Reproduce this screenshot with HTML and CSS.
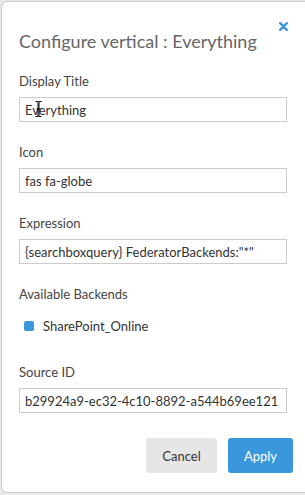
FILE: index.html
```html
<!DOCTYPE html>
<html lang="en">
<head>
  <meta charset="UTF-8">
  <meta name="viewport" content="width=device-width, initial-scale=1.0">
  <title>Configure vertical</title>
  <link rel="stylesheet" href="styles.css">
</head>
<body>
  <div class="modal">
    <div class="modal-header">
      <button class="close-button" aria-label="Close">
        <svg width="9" height="9" viewBox="0 0 9 9"><path d="M1.2 1.2 L7.8 7.8 M7.8 1.2 L1.2 7.8" stroke="#3b97dd" stroke-width="2.4" stroke-linecap="round"/></svg>
      </button>
      <h2 class="modal-title">Configure vertical : Everything</h2>
    </div>

    <div class="modal-body">
      <div class="field">
        <label class="field-label">Display Title</label>
        <div class="input-wrap">
          <input class="field-input" type="text" value="Everything">
          <!-- mouse cursor over the input -->
          <svg class="text-cursor" width="7" height="16" viewBox="0 0 7 16"><path d="M0.5 0.5h2.5v15h-2.5 M6.5 0.5h-2.5v15h2.5 M1.5 8h4" fill="none" stroke="#000" stroke-width="1"/></svg>
        </div>
      </div>

      <div class="field">
        <label class="field-label">Icon</label>
        <input class="field-input" type="text" value="fas fa-globe">
      </div>

      <div class="field">
        <label class="field-label">Expression</label>
        <input class="field-input" type="text" value='{searchboxquery} FederatorBackends:"*"'>
      </div>

      <div class="field">
        <label class="field-label">Available Backends</label>
        <div class="backend-list">
          <label class="backend"><span class="checkbox"></span>SharePoint_Online</label>
        </div>
      </div>

      <div class="field">
        <label class="field-label">Source ID</label>
        <input class="field-input" type="text" value="b29924a9-ec32-4c10-8892-a544b69ee121">
      </div>
    </div>

    <div class="modal-footer">
      <button class="btn btn-default">Cancel</button>
      <button class="btn btn-primary">Apply</button>
    </div>
  </div>
</body>
</html>
```

FILE: styles.css
```css
* {
  margin: 0;
  padding: 0;
  box-sizing: border-box;
}

body {
  font-family: Lato, "Open Sans", sans-serif;
  background: #e9e9e9;
  overflow: hidden;
  color: #333;
}

.modal {
  margin: 1px 0 0 1px;
  width: 304px;
  height: 492px;
  background: #fff;
  border: 1px solid #cacaca;
  border-right: none;
  border-radius: 6px 0 0 6px;
  padding: 0 0 0 17px;
}

.modal-header {
  position: relative;
  padding-top: 28px;
}

.modal-title {
  font-size: 18px;
  font-weight: 400;
  line-height: 23px;
  color: #666;
}

.close-button {
  position: absolute;
  top: 20px;
  left: 260px;
  border: none;
  background: none;
  width: 9px;
  height: 9px;
  display: flex;
  cursor: pointer;
}

.modal-body {
  padding-top: 20px;
  width: 268px;
  display: flex;
  flex-direction: column;
  gap: 22px;
}

.field-label {
  display: block;
  font-size: 13px;
  line-height: 16px;
  color: #444;
  margin-bottom: 8px;
}

.input-wrap {
  position: relative;
}

.field-input {
  display: block;
  width: 268px;
  height: 25px;
  border: 1px solid #cccccc;
  padding: 0 5px;
  font-family: Lato, "Open Sans", sans-serif;
  font-size: 13px;
  color: #333;
  background: #fff;
  outline: none;
}

.text-cursor {
  position: absolute;
  left: 16px;
  top: 4px;
}

.backend-list {
  padding: 8px 0 8px 5px;
}

.backend {
  display: flex;
  align-items: center;
  gap: 9px;
  height: 16px;
  font-size: 13px;
  color: #333;
}

.checkbox {
  width: 10px;
  height: 10px;
  border-radius: 2px;
  background: #3b97dd;
}

.modal-footer {
  display: flex;
  justify-content: flex-end;
  gap: 11px;
  width: 274px;
  padding-top: 25px;
}

.btn {
  height: 35px;
  border: none;
  border-radius: 3px;
  font-family: Lato, "Open Sans", sans-serif;
  font-size: 13px;
  cursor: pointer;
}

.btn-default {
  width: 71px;
  background: #e6e6e6;
  color: #333;
}

.btn-primary {
  width: 65px;
  background: #3a97dc;
  color: #fff;
}
```
